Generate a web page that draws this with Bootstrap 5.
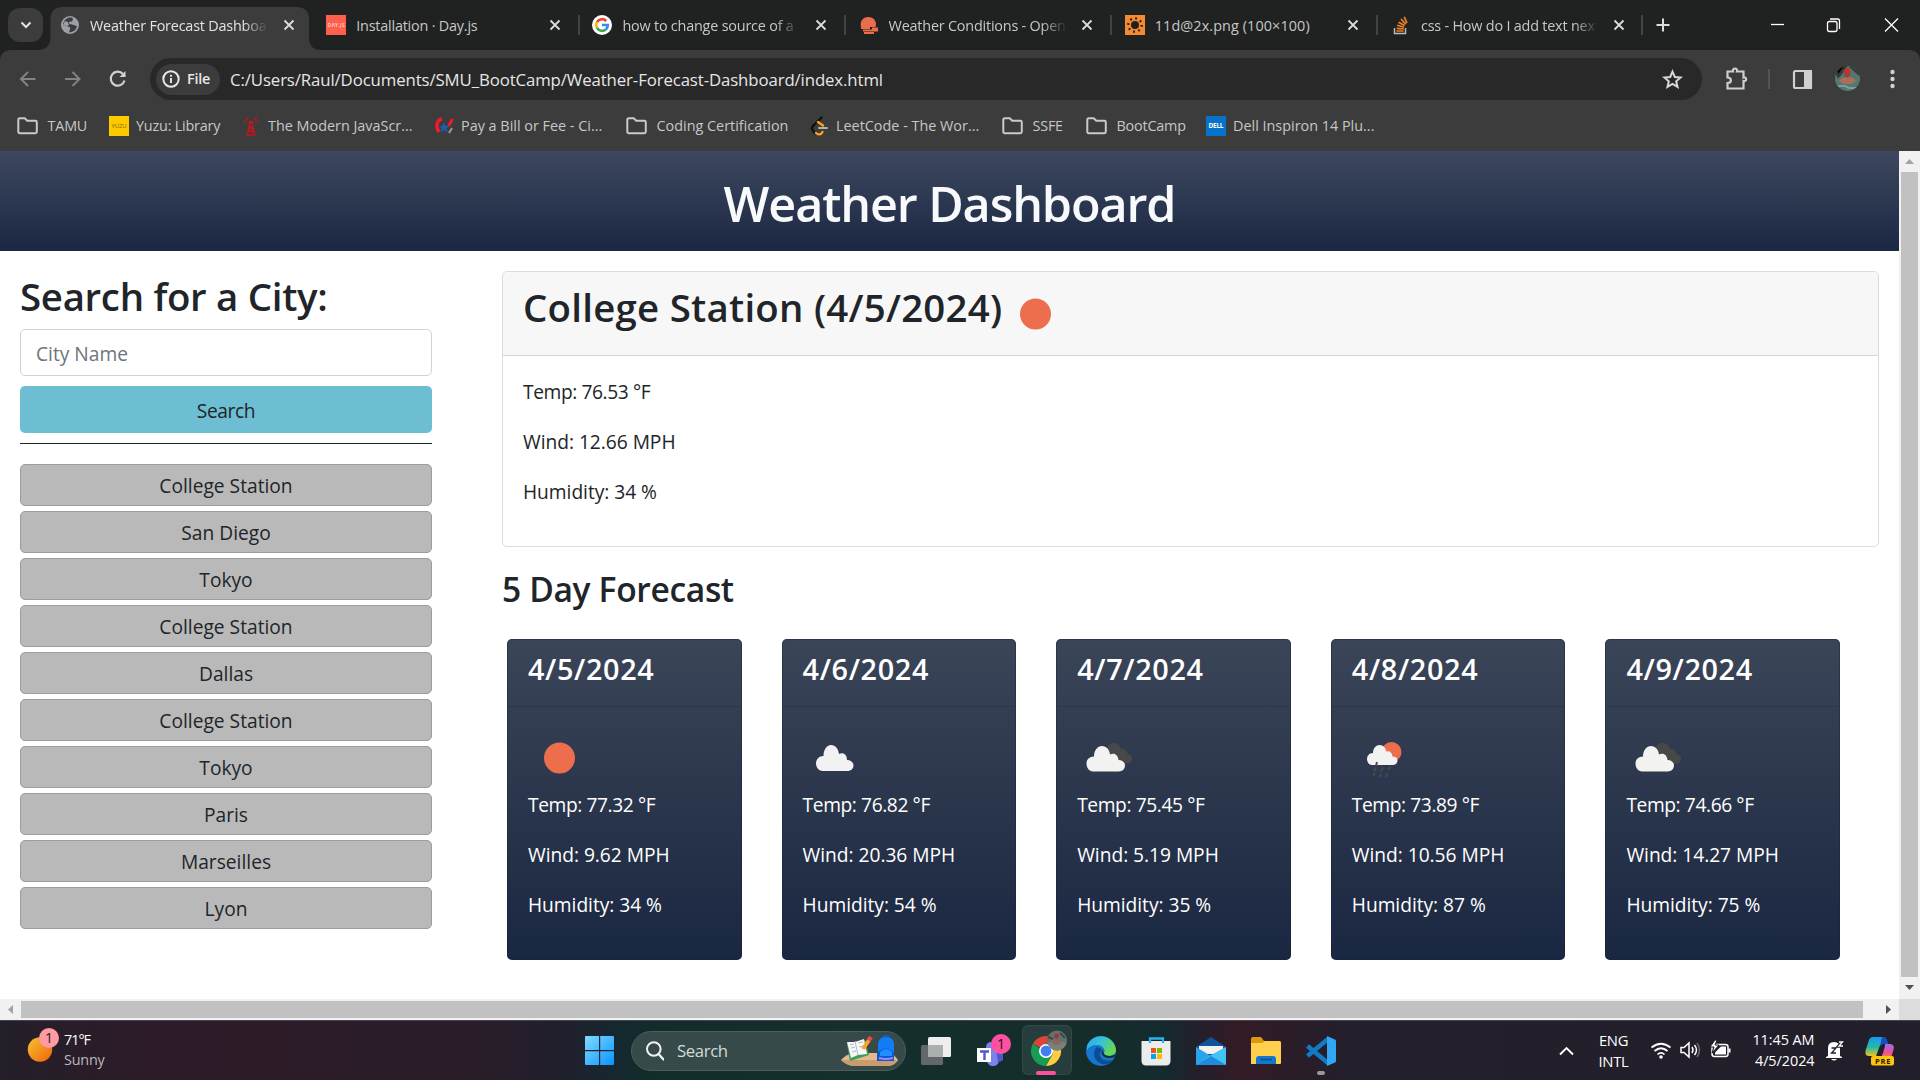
<!DOCTYPE html>
<html lang="en">
<head>
<meta charset="utf-8">
<meta name="viewport" content="width=device-width, initial-scale=1">
<title>Weather Forecast Dashboard</title>
<link href="https://cdn.jsdelivr.net/npm/bootstrap@5.3.0/dist/css/bootstrap.min.css" rel="stylesheet">
<style>
html,body{height:1080px;overflow:hidden}
body{font-family:"Open Sans","Noto Sans",sans-serif;font-size:19.2px;line-height:30px;letter-spacing:-.03px;color:#212529;background:#fff}
svg{display:block;flex:none}
/* browser chrome */
.browser-text{font-size:14.4px;line-height:20px;letter-spacing:-.2px;color:#c7c7c7;white-space:nowrap}
.tabstrip{height:50px;background:#202221;padding-left:8px}
.tab-search{width:35px;height:34px;border-radius:12px;background:#3c3c3c;margin-right:4.5px}
.tab{width:266.2px;height:50px;padding-left:12.5px;position:relative}
.tab-label{width:177px;margin:1px 15.5px 0 10px;overflow:hidden}
.tab-label.fade-out{-webkit-mask-image:linear-gradient(90deg,#000 153px,transparent 178px);mask-image:linear-gradient(90deg,#000 153px,transparent 178px)}
.tab.current{color:#e3e3e3}
.tab.current .tab-bg{position:absolute;left:-10px;top:7px;z-index:0}
.tab.current>:not(.tab-bg){z-index:1}
.tab.ruled::after{content:"";position:absolute;right:0;top:15px;width:2px;height:20px;background:#434343}
.toolbar-wrap{background:#202221}
.tool{height:50px;background:#3c3c3c;border-radius:10px 10px 0 0;padding-top:8px}
.omnibox{width:1552px;height:42px;border-radius:21px;background:#282828;padding-left:6px;padding-right:19px}
.chip{width:64px;height:31px;border-radius:16px;background:#3c3c3c;color:#e8e8e8;padding-left:6px;gap:7px}
.url{font-size:16.8px;letter-spacing:-.11px;color:#e6e6e6;margin:1px 0 0 10px;white-space:nowrap}
.bookmarks{height:51px;background:#3c3c3c;padding-left:17px}
.bookmarks>div{display:flex;align-items:center;width:193px;gap:7px}
.bookmarks>.folder{gap:9.5px}
.bookmarks>.trail{letter-spacing:0}
.bookmarks>:nth-child(1){width:92px}.bookmarks>:nth-child(2){width:132px}
.bookmarks>:nth-child(4){width:192px}.bookmarks>:nth-child(5){width:183px}
.bookmarks>:nth-child(7){width:84px}.bookmarks>:nth-child(8){width:120px}
/* page */
.viewport{height:869px}
.page{width:1899px;height:848px}
.hero{height:100px;background:linear-gradient(#3d475f,#1b2842);padding-top:22px}
.hero h1{font-size:48.5px;line-height:60px;font-weight:600;letter-spacing:-1.1px;color:#f8f9fa;margin:0}
.side{width:412px;padding-top:21px}
.side h2{font-size:38.4px;line-height:48px;font-weight:600;letter-spacing:-.3px;margin-bottom:9px}
.form-control{height:47px;font-size:19.2px;padding:2px 15px 0;border:1px solid #ced4da;border-radius:5px;letter-spacing:0}
.form-control::placeholder{color:#6c757d}
.search-btn{height:47px;border-radius:5px;background:#6dbdd3;color:#212529;font-size:19.2px;padding:3px 0 0;border:0;margin-top:10px;letter-spacing:-.4px}
.rule{height:1px;background:#222;margin:10px 0 20px}
.city{height:42px;margin-bottom:5px;border-radius:5px;background:#b9b9b9;border:1px solid #9c9c9c;color:#212529;font-size:19.2px;line-height:30px;padding:2px 0 0;letter-spacing:0}
.detail{width:1377px;padding-top:20px;margin-left:70px}
.now{height:276px;border:1px solid #dcdcdc;border-radius:5px}
.now .card-header{height:84px;padding:11px 20px 0;background:#f7f7f7;border-bottom:1px solid #d8d8d8}
.now h2{font-size:38.4px;line-height:48px;font-weight:600;letter-spacing:.25px;margin:0 2px 0 0}
.card-body{padding:21px 20px 0}
.card-body p{margin:0 0 20px;white-space:nowrap}
.card-body p:first-of-type{letter-spacing:-.4px}
.detail h3{font-size:33.6px;line-height:42px;font-weight:600;letter-spacing:-.35px;margin:21px 0 29px}
.forecast{gap:40px;padding-left:5px}
.day{width:234.6px;height:321px;border:0;border-radius:5px;background:linear-gradient(#3b4558,#1a2741);color:#fff;box-shadow:inset 0 0 0 1px rgba(25,35,60,.45)}
.day .card-header{height:68px;padding:12px 21px 0;background:none;border-bottom:1px solid #2c364b}
.day h4{font-size:28.8px;line-height:36px;font-weight:600;letter-spacing:.65px;margin:0}
.day .card-body{padding:20px 21px 0}
.day .card-body svg{margin-bottom:1px}
.vbar{width:21px;background:#f1f1f1}
.vbar .thumb{width:17px;height:805px;background:#c1c1c1}
.hbar{height:21px;background:#f1f1f1}
.hbar .thumb{width:1842px;height:17px;background:#c1c1c1}
.arrow{width:21px;height:21px}
/* taskbar */
.taskbar{height:60px;border-top:1px solid #47444f;background:linear-gradient(90deg,#241f2a 0,#2d1b29 8%,#2d1b28 14%,#281e2a 26%,#211f2c 29%,#182630 31.5%,#112c2b 33.5%,#142f2c 44%,#142d2b 58%,#132b2e 60.5%,#241f2b 62.5%,#341b26 64.5%,#2b1d28 67%,#231f2b 70%,#221f2a 100%);color:#fff}
.taskbar .small-text{font-size:14.4px;line-height:20.5px;letter-spacing:-.2px}
.w-widget{width:565px;padding-left:27px;gap:8px}
.w-widget .small-text div:first-child{letter-spacing:-1px}
.winsearch{width:275px;height:40px;border-radius:20px;background:#364a4a;border:1px solid #4c5d5c;margin-left:17px;padding:0 6px 0 14px}
.winsearch span{font-size:16.8px;letter-spacing:-.4px;color:#d5dada;margin-left:13px}
.apps{margin-left:2.5px}
.apps>div{width:55px;height:59px;display:flex;align-items:center;justify-content:center;position:relative}
.apps .open::before{content:"";position:absolute;inset:4px 2px 5px 3px;border-radius:6px;background:rgba(255,255,255,.08);border:1px solid rgba(255,255,255,.06)}
.apps svg{position:relative;overflow:visible}
.run-mark{position:absolute;bottom:5px;left:17px;width:20px;height:4px;border-radius:2px;background:#ff4fa0}
.run-mark.idle{left:23px;width:8px;background:#999}
.tray{margin-left:auto;padding-right:25px}
</style>
</head>
<body class="d-flex flex-column">
<svg width="0" height="0" class="position-absolute">
  <defs>
    <symbol id="x" viewBox="0 0 12 12"><path d="M1.500 1.500l9 9M10.500 1.500l-9 9" stroke="#dcdcdc" stroke-width="1.800" fill="none"/></symbol>
    <symbol id="folder" viewBox="0 0 21 18"><path d="M1.300 2.700c0-.8.5-1.400 1.300-1.400h5.200l2.400 2.500h8.200c.8 0 1.400.6 1.400 1.400v9.600c0 .8-.6 1.400-1.400 1.400H2.700c-.8 0-1.400-.6-1.400-1.400z" fill="none" stroke="#c9c9c9" stroke-width="2"/></symbol>
    <symbol id="sun" viewBox="0 0 62 62"><circle cx="31.500" cy="31" r="15.500" fill="#ec6e4c"/></symbol>
    <symbol id="cloud" viewBox="0 0 62 62"><path d="M20 44c-4 0-7-3.500-7-7.500s3-7.500 7.500-7.500c0-6 3-11 7.500-11s7.500 4 8 9c4-2 8 0 8 6 4 0 6.500 2.500 6.500 5.500s-2.500 5.500-6 5.500z" fill="#f2f2f2"/></symbol>
    <symbol id="clouds" viewBox="0 0 62 62"><path d="M29 25c0-6 4-9 7.500-9 4 0 7 3 7.500 6 4-1 6.500 2 6.500 5 3 0 4.500 3 4.500 4.500 0 3-2 5-5 5H35z" fill="#484848"/><path d="M16 44.500c-4 0-6.500-4-6.500-8s3-7 7.500-7c0-6 3.500-10.500 8-10.500s7.500 4 8 8.500c5-2 8 1 8.500 5.500 4 0 6.500 2.500 6.500 5.500s-2.500 6-6.500 6z" fill="#f2f2f0"/></symbol>
    <symbol id="rain" viewBox="0 0 62 62"><circle cx="39.500" cy="25" r="10" fill="#ec6e4c"/><path d="M20 38c-3 0-5-3-5-6s2-6 6-6c0-4 2.500-8 6.500-8s6.500 3 6.500 6.500c4-1 6 1 6.500 5 3 0 5 1.500 5 4s-2 4.500-5 4.500z" fill="#f2f2f2"/><path d="M25 35l-1 4M24 40.500l-2 4M31 40.500l-2 4M38 40l-1.500 3M22.500 46l-1 3M29 47l-1 3M35 46l-1 4" stroke="#4a4a4c" stroke-width="2"/></symbol>
  </defs>
</svg>

<!-- tab strip -->
<div class="tabstrip browser-text d-flex align-items-center">
  <div class="tab-search d-flex align-items-center justify-content-center"><svg width="12" height="8" viewBox="0 0 12 8"><path d="M1.500 1.500L6 6l4.500-4.500" fill="none" stroke="#e3e3e3" stroke-width="2"/></svg></div>
  <div class="tab current d-flex align-items-center">
    <svg class="tab-bg" width="282" height="43" viewBox="0 0 282 43"><path d="M0 43c8 0 12.500-5 12.500-12V12c0-8 5-12 12-12h234c8 0 12.500 4 12.500 12v19c0 7 4 12 11 12z" fill="#3c3c3c"/></svg>
    <svg class="position-relative" width="20" height="20" viewBox="0 0 20 20"><circle cx="10" cy="10" r="9" fill="#9aa0a6"/><path d="M9 2.600C5 4 3 7 3 10l5 1.500c1.500 0 2.500 1 2 2.500l-1 3.200c4 .2 7-2 8-6l-4-1.500-3-.7c-1.500-.5-1-2 0-2.500h2l1-2.500c.2-1-2-1.700-4-1.400z" fill="#3c3c3c"/><path d="M5 6l3 1 1 3-2 1-4-1z" fill="#9aa0a6"/></svg>
    <div class="tab-label fade-out position-relative">Weather Forecast Dashboa</div><svg class="position-relative" width="12" height="12"><use href="#x"/></svg>
  </div>
  <div class="tab ruled d-flex align-items-center">
    <svg width="20" height="20" viewBox="0 0 20 20"><rect width="20" height="20" fill="#ff5f4c"/><text x="1.500" y="12" font-size="5" font-weight="700" fill="#ffc9bf" textLength="17">DAY.JS</text></svg>
    <div class="tab-label">Installation · Day.js</div><svg width="12" height="12"><use href="#x"/></svg>
  </div>
  <div class="tab ruled d-flex align-items-center">
    <svg width="20" height="20" viewBox="0 0 20 20"><circle cx="10" cy="10" r="10" fill="#fff"/><g fill="none" stroke-width="2.700"><path d="M5 7.100A5.800 5.800 0 0 1 14.200 6" stroke="#ea4335"/><path d="M5 12.900a5.800 5.800 0 0 1 0-5.800" stroke="#fbbc05"/><path d="M13.800 14.400A5.800 5.800 0 0 1 5 12.900" stroke="#34a853"/><path d="M10 10h5.800c0 1.900-.8 3.400-2 4.400" stroke="#4285f4"/></g></svg>
    <div class="tab-label fade-out">how to change source of a</div><svg width="12" height="12"><use href="#x"/></svg>
  </div>
  <div class="tab ruled d-flex align-items-center">
    <svg width="20" height="20" viewBox="0 0 20 20"><path d="M2 12C.5 5 5 2 9.500 2S18.500 6 16.500 12z" fill="#eb6e4b"/><path d="M2 13h9M13 13.500h6M4 15.500h15M5 18h10" stroke="#eb6e4b" stroke-width="1.800"/></svg>
    <div class="tab-label fade-out">Weather Conditions - Open</div><svg width="12" height="12"><use href="#x"/></svg>
  </div>
  <div class="tab ruled d-flex align-items-center">
    <svg width="20" height="20" viewBox="0 0 20 20"><rect width="20" height="20" fill="#f58a33"/><circle cx="10" cy="10" r="4" fill="#202020"/><circle cx="10" cy="10" r="6.700" fill="none" stroke="#202020" stroke-width="2.300" stroke-dasharray="1.800 3.460"/></svg>
    <div class="tab-label" style="letter-spacing:.1px">11d@2x.png (100×100)</div><svg width="12" height="12"><use href="#x"/></svg>
  </div>
  <div class="tab ruled d-flex align-items-center" style="width:265px">
    <svg width="20" height="20" viewBox="0 0 20 20"><path d="M3.500 13v5.500h11V13" fill="none" stroke="#bcbbbb" stroke-width="1.500"/><path d="M5.500 16h7M5.700 13.300l7 .7M6.200 10.300l6.800 2M7.500 7.200l6.200 3.400M10 4l4.800 5.200M13.200 1.800L16 8" stroke="#f48024" stroke-width="1.700"/></svg>
    <div class="tab-label fade-out">css - How do I add text nex</div><svg width="12" height="12"><use href="#x"/></svg>
  </div>
  <svg width="14" height="14" viewBox="0 0 14 14" style="margin-left:13px"><path d="M7 .5v13M.5 7h13" stroke="#dcdcdc" stroke-width="2"/></svg>
  <svg class="ms-auto" style="margin-right:21px" width="128" height="16" viewBox="0 0 128 16"><g fill="none" stroke="#fff" stroke-width="1.300"><path d="M0 7.500h13"/><rect x="56.500" y="4.500" width="9.500" height="10" rx="2"/><path d="M59 2h7.500a2 2 0 0 1 2 2V12"/><path d="M114 1.500l13 13M127 1.500l-13 13"/></g></svg>
</div>

<!-- toolbar -->
<div class="toolbar-wrap">
<div class="tool browser-text d-flex align-items-center">
  <svg width="150" height="42" viewBox="0 0 150 42" fill="none" stroke-width="2"><path d="M35.500 21h-14M28 14l-7 7 7 7" stroke="#828282"/><path d="M65 21h14M72.500 14l7 7-7 7" stroke="#828282"/><path d="M124.500 22.500a7 7 0 1 1-1.500-6.500l2 2" stroke="#d0d0d0" stroke-width="2.200"/><path d="M125.500 13v6h-6z" fill="#d0d0d0"/></svg>
  <div class="omnibox d-flex align-items-center">
    <div class="chip d-flex align-items-center"><svg width="18" height="18" viewBox="0 0 18 18"><circle cx="9" cy="9" r="7.700" fill="none" stroke="#e8e8e8" stroke-width="2"/><path d="M9 8v5M9 4.800v2" stroke="#e8e8e8" stroke-width="1.900"/></svg><span class="fw-semibold">File</span></div>
    <div class="url">C:/Users/Raul/Documents/SMU_BootCamp/Weather-Forecast-Dashboard/index.html</div>
    <svg class="ms-auto" width="21" height="21" viewBox="0 0 20 20"><path d="M10 2.500l2.200 5.100 5.500.5-4.200 3.600 1.300 5.400L10 14.200l-4.800 2.900 1.300-5.400-4.200-3.600 5.500-.5z" fill="none" stroke="#d8d8d8" stroke-width="1.900"/></svg>
  </div>
  <svg width="218" height="42" viewBox="0 0 218 42"><path d="M25.500 13.500h5.500c-1-4 5-4 4 0h6.500v6c3.500-1 3.500 4.500 0 3.500v7.500h-16v-5.500c4.500 0 4.500-5.500 0-5.500z" fill="none" stroke="#cfcfcf" stroke-width="2.200"/><path d="M67 11v20" stroke="#5d5d5d" stroke-width="1.500"/><rect x="92" y="13" width="17" height="17" rx="1.500" fill="none" stroke="#cfcfcf" stroke-width="2.200"/><path d="M102 12h8v19h-8z" fill="#cfcfcf"/><clipPath id="av"><circle cx="145.500" cy="20.500" r="12.500"/></clipPath><g clip-path="url(#av)"><path d="M132 7h28v16h-28z" fill="#5c736d"/><path d="M132 8h12l-8 10zM148 8l10 9M136 19l5-6" stroke="#2f3d37" stroke-width="2.500"/><path d="M132 21l28-1v14h-28z" fill="#527a72"/><path d="M137 23c4-5 13-6 17 0l-5 3h-8z" fill="#a8705a"/><path d="M136 28h7l4 2h9" stroke="#7d9c96" stroke-width="2"/><circle cx="145" cy="16.500" r="3" fill="#8d4638"/><path d="M141.500 14c1-6 7-5 7 1z" fill="#d3282d"/></g><g fill="#d0d0d0"><circle cx="190.500" cy="14" r="2.200"/><circle cx="190.500" cy="21" r="2.200"/><circle cx="190.500" cy="28" r="2.200"/></g></svg>
</div>
</div>

<!-- bookmarks -->
<div class="bookmarks browser-text d-flex align-items-center">
  <div class="folder"><svg width="21" height="18"><use href="#folder"/></svg>TAMU</div>
  <div><svg width="20" height="20" viewBox="0 0 20 20"><rect width="20" height="20" fill="#fdca00"/><text x="2.500" y="12" font-size="6" fill="#7b6510" textLength="15">YUZU</text></svg>Yuzu: Library</div>
  <div class="trail"><svg width="20" height="20" viewBox="0 0 20 20" fill="none" stroke="#c5151d"><path d="M9 7L6 19M11 7l3 12M8 10l4.500 3.500-6 3.500M12 10l-4.500 3.500 6 3.500" stroke-width="1.200"/><path d="M5.500 19h9" stroke-width="1.500"/><path d="M8.300 5.500h3.400v2.500H8.300z" fill="#c5151d"/><path d="M7 4L4 1M6 6L2 5M13 4l3-3M14 6l4-1" stroke-width="1.100"/></svg>The Modern JavaScr...</div>
  <div class="trail"><svg width="20" height="20" viewBox="0 0 20 20"><path d="M8 3C3 4 1 10 5 16" fill="none" stroke="#ed1c29" stroke-width="3.500"/><path d="M10 6l1.500 4H15l-2.500 2.500 1 4L10 14l-3.500 2.500 1-4L5 10h3.500z" fill="#1c5db0"/><path d="M18.500 3l-4 7" stroke="#ed1c29" stroke-width="3"/><path d="M18 12l-3 5" stroke="#999" stroke-width="2"/></svg>Pay a Bill or Fee - Ci...</div>
  <div class="folder"><svg width="21" height="18"><use href="#folder"/></svg><span style="letter-spacing:0">Coding Certification</span></div>
  <div class="trail"><svg width="20" height="20" viewBox="0 0 20 20" fill="none" stroke-width="2.400" stroke-linecap="round"><path d="M12.500 1.500L4 10" stroke="#111"/><path d="M4 10c-2 2-1 4 1 6l1.500 1.500" stroke="#111"/><path d="M9 6l5 3.500M7 17c2 2 5 2 6.500-1" stroke="#ffa116"/><path d="M10 12h8" stroke="#b3b3b3" stroke-width="2"/></svg>LeetCode - The Wor...</div>
  <div class="folder"><svg width="21" height="18"><use href="#folder"/></svg>SSFE</div>
  <div class="folder"><svg width="21" height="18"><use href="#folder"/></svg>BootCamp</div>
  <div class="trail"><svg width="20" height="20" viewBox="0 0 20 20"><rect width="20" height="20" fill="#0672cb"/><text x="2.500" y="12.300" font-size="6.500" font-weight="700" fill="#fff" textLength="15">DELL</text></svg>Dell Inspiron 14 Plu...</div>
</div>

<!-- page viewport with scrollbars -->
<div class="viewport">
  <div class="d-flex">
    <main class="page">
      <header class="hero text-center"><h1>Weather Dashboard</h1></header>
      <div class="d-flex" style="margin-left:20px">
        <aside class="side">
          <h2>Search for a City:</h2>
          <input class="form-control" type="text" placeholder="City Name">
          <button class="btn search-btn w-100 d-block">Search</button>
          <div class="rule"></div>
          <button class="btn city w-100 d-block">College Station</button>
          <button class="btn city w-100 d-block">San Diego</button>
          <button class="btn city w-100 d-block">Tokyo</button>
          <button class="btn city w-100 d-block">College Station</button>
          <button class="btn city w-100 d-block">Dallas</button>
          <button class="btn city w-100 d-block">College Station</button>
          <button class="btn city w-100 d-block">Tokyo</button>
          <button class="btn city w-100 d-block">Paris</button>
          <button class="btn city w-100 d-block">Marseilles</button>
          <button class="btn city w-100 d-block">Lyon</button>
        </aside>
        <section class="detail">
          <div class="card now">
            <div class="card-header d-flex"><h2>College Station (4/5/2024)</h2><svg width="62" height="62"><use href="#sun"/></svg></div>
            <div class="card-body"><p>Temp: 76.53 °F</p><p>Wind: 12.66 MPH</p><p>Humidity: 34 %</p></div>
          </div>
          <h3>5 Day Forecast</h3>
          <div class="forecast d-flex">
            <div class="card day"><div class="card-header"><h4>4/5/2024</h4></div><div class="card-body"><svg width="62" height="62"><use href="#sun"/></svg><p>Temp: 77.32 °F</p><p>Wind: 9.62 MPH</p><p>Humidity: 34 %</p></div></div>
            <div class="card day"><div class="card-header"><h4>4/6/2024</h4></div><div class="card-body"><svg width="62" height="62"><use href="#cloud"/></svg><p>Temp: 76.82 °F</p><p>Wind: 20.36 MPH</p><p>Humidity: 54 %</p></div></div>
            <div class="card day"><div class="card-header"><h4>4/7/2024</h4></div><div class="card-body"><svg width="62" height="62"><use href="#clouds"/></svg><p>Temp: 75.45 °F</p><p>Wind: 5.19 MPH</p><p>Humidity: 35 %</p></div></div>
            <div class="card day"><div class="card-header"><h4>4/8/2024</h4></div><div class="card-body"><svg width="62" height="62"><use href="#rain"/></svg><p>Temp: 73.89 °F</p><p>Wind: 10.56 MPH</p><p>Humidity: 87 %</p></div></div>
            <div class="card day"><div class="card-header"><h4>4/9/2024</h4></div><div class="card-body"><svg width="62" height="62"><use href="#clouds"/></svg><p>Temp: 74.66 °F</p><p>Wind: 14.27 MPH</p><p>Humidity: 75 %</p></div></div>
          </div>
        </section>
      </div>
    </main>
    <div class="vbar d-flex flex-column align-items-center">
      <svg class="arrow" viewBox="0 0 21 21"><path d="M6 13h9l-4.500-5z" fill="#a3a3a3"/></svg>
      <div class="thumb"></div>
      <svg class="arrow mt-auto" viewBox="0 0 21 21"><path d="M6 7h9l-4.500 5z" fill="#505050"/></svg>
    </div>
  </div>
  <div class="hbar d-flex align-items-center">
    <svg class="arrow" viewBox="0 0 21 21"><path d="M13 6v9l-5-4.500z" fill="#a3a3a3"/></svg>
    <div class="thumb"></div>
    <svg style="margin-left:15px" class="arrow" viewBox="0 0 21 21"><path d="M8 6v9l5-4.500z" fill="#505050"/></svg>
    <div class="ms-auto h-100" style="width:21px;background:#dcdcdc"></div>
  </div>
</div>

<!-- taskbar -->
<div class="taskbar d-flex align-items-center">
  <div class="w-widget d-flex align-items-center">
    <svg width="32" height="40" viewBox="0 0 32 40" style="overflow:visible"><defs><linearGradient id="sg" x1="0" y1="0" x2="1" y2="1"><stop offset="0" stop-color="#f7c331"/><stop offset="1" stop-color="#f0620c"/></linearGradient></defs><circle cx="13" cy="18.500" r="12.200" fill="url(#sg)"/><circle cx="22" cy="7" r="10" fill="#ff99a4"/><text x="22" y="12" font-size="14" text-anchor="middle" fill="#1c1c1c">1</text></svg>
    <div class="small-text" style="margin:-1px 0 0 -3px"><div>71°F</div><div style="color:#bdb8bd">Sunny</div></div>
  </div>
  <svg width="49" height="30" viewBox="-20 0 49 30"><defs><linearGradient id="wg" x1="0" y1="0" x2="1" y2="1"><stop offset="0" stop-color="#7fdcff"/><stop offset="1" stop-color="#0a93ff"/></linearGradient></defs><path d="M0 1q0-1 1-1h13v14H0zM15.200 0H28q1 0 1 1v13H15.200zM0 15.200h14V29H1q-1 0-1-1zM15.200 15.200H29V28q0 1-1 1H15.200z" fill="url(#wg)"/></svg>
  <div class="winsearch d-flex align-items-center">
    <svg width="18" height="20" viewBox="0 0 18 20" fill="none" stroke="#f0f2f2" stroke-width="2"><circle cx="7.800" cy="8" r="6.800"/><path d="M12.500 13l5 5.500" stroke-linecap="round" stroke-width="2.300"/></svg>
    <span>Search</span>
    <svg class="ms-auto" width="58" height="34" viewBox="0 0 58 34"><path d="M0 26q5-6 14-7h30q10 1 13 7-3 5-9 6H12Q5 31 0 26z" fill="#e3b88d"/><path d="M0 26h57q-3 5-9 6H12Q5 31 0 26z" fill="#c99c6e"/><path d="M6 10l3 17 19-6-4-15z" fill="#3f9e57"/><path d="M6 8l4 16 7-3 9-1-3-15-9 3z" fill="#f6f7fa"/><path d="M14 7l3 14M9 11l4-1M10 14l4-1M11 18l4-1M17 9l5-1M18 13l5-1" stroke="#b5b9c7"/><path d="M22 15l6-9" stroke="#f9a52a" stroke-width="4"/><path d="M27.500 6.500L30 3" stroke="#f2473e" stroke-width="4.500"/><path d="M41 4q4-5 8 0" fill="none" stroke="#1260b5" stroke-width="2"/><path d="M37 11q0-8 8-8t8 8v15H37z" fill="#117cf3"/><path d="M36 19q9-9 17 0v8H36z" fill="#0759cf"/><path d="M39 18q6-6 12 0v4H39z" fill="#218dff"/><path d="M38 24q7 2 14 0" stroke="#a784ff" stroke-width="2" fill="none"/></svg>
  </div>
  <div class="apps d-flex">
    <div><svg width="30" height="28" viewBox="0 0 30 28"><rect x="0" y="8" width="22" height="20" rx="1.500" fill="#636769"/><rect x="7" y="0" width="23" height="20" rx="1.500" fill="#eee"/><path d="M7 8h15v12H7z" fill="#aaafb0"/></svg></div>
    <div><svg width="28" height="32" viewBox="0 0 28 32"><circle cx="14" cy="12" r="5" fill="#7b83eb"/><path d="M10 12h12v13c0 4-3 6-6 6s-6-2-6-6z" fill="#7b83eb"/><path d="M19 15h7v10q-2 2-5 2z" fill="#5059c9"/><rect y="13" width="14" height="14" fill="#fff"/><path d="M3 16.500h9M7.500 16v9" stroke="#5059c9" stroke-width="2.400"/><circle cx="24" cy="9" r="10" fill="#ff4fa0"/><text x="24" y="14" font-size="14" text-anchor="middle" fill="#26101b">1</text></svg></div>
    <div class="open"><svg width="30" height="30" viewBox="0 0 30 30"><path d="M15 15L2 7.500A15 15 0 0 1 28 7.500H15z" fill="#db4437"/><path d="M2 7.500A15 15 0 0 0 15 30l6-11-6-2z" fill="#179c52"/><path d="M28 7.500A15 15 0 0 1 15 30l6.500-11.500L21 8z" fill="#ffcd40"/><circle cx="15" cy="15" r="7" fill="#fff"/><circle cx="15" cy="15" r="5.400" fill="#3f7ff0"/><clipPath id="pc"><circle cx="26" cy="4.500" r="10"/></clipPath><g clip-path="url(#pc)"><path d="M16-6h20v21H16z" fill="#64716d"/><path d="M16 7q9-4 20 0v8H16z" fill="#77827e"/><path d="M20 6q5-4 11 0l-3 3h-5z" fill="#8d675a"/><circle cx="25.500" cy="0" r="2.300" fill="#b8292c"/><path d="M17 1l5 2M29-3l5 5" stroke="#3b4945" stroke-width="2"/></g></svg><i class="run-mark"></i></div>
    <div><svg width="30" height="30" viewBox="0 0 30 30"><defs><linearGradient id="eg" x1="0" y1="0" x2="1" y2=".5"><stop offset="0" stop-color="#28a8e8"/><stop offset=".5" stop-color="#35c3d8"/><stop offset="1" stop-color="#6ad84c"/></linearGradient></defs><circle cx="15" cy="15" r="15" fill="#1576cf"/><path d="M1 10A15 15 0 0 1 30 14c0 4-4 6-8 6-3 0-5-1-4-3 2-3-1-8-7-8-5 0-8 2-10 5z" fill="url(#eg)"/><path d="M11 11c-4 3-4 10 0 14 4 4 11 5 16-1-3 1-13 2-13-6 0-2 1-4 2-5z" fill="#0b4c93"/><path d="M16.500 14c-2 2-1 8 7 8 3 0 4-1 5-1l1-3c-2 2-8 3-11.500 0z" fill="#132d31"/></svg></div>
    <div><svg width="30" height="30" viewBox="0 0 30 30"><path d="M9 7V2.500h13V7" fill="none" stroke="#26b4ee" stroke-width="2.300"/><path d="M.5 5h29v20c0 3-2 4.500-4.500 4.500H5C2.500 29.500.5 28 .5 25z" fill="#ececec"/><path d="M9 5v2M22 5v2" stroke="#26b4ee" stroke-width="2.300"/><path d="M10 12h5v5h-5z" fill="#f25022"/><path d="M16 12h5v5h-5z" fill="#7fba00"/><path d="M10 18h5v5h-5z" fill="#00a4ef"/><path d="M16 18h5v5h-5z" fill="#ffb900"/></svg></div>
    <div><svg width="30" height="28" viewBox="0 0 30 28"><path d="M0 10L15 0l15 10-15 9z" fill="#0f539c"/><path d="M3 9h24v8H3z" fill="#f1f1f1"/><path d="M0 10l15 9L30 10v18H0z" fill="#2aa3ec"/><path d="M0 28l15-10L30 10v18z" fill="#42c3f5"/><path d="M0 28l15-9 15 9z" fill="#208ae0"/></svg></div>
    <div><svg width="30" height="27" viewBox="0 0 30 27"><path d="M0 2q0-2 2-2h8l3 4h15q2 0 2 2v8H0z" fill="#dc9a0b"/><path d="M0 6h11l3-2h14q2 0 2 2v20q0 1-1 1H0z" fill="#ffd04d"/><path d="M5 27v-5q0-3 3-3h14q3 0 3 3v5z" fill="#1277cd"/><path d="M9 22.500h12" stroke="#0b4f91" stroke-width="1.500"/></svg></div>
    <div><svg width="30" height="30" viewBox="0 0 30 30"><path d="M1.500 10L22 27M1.500 20L22 3" stroke="#1279c4" stroke-width="4.500"/><path d="M21 0l8 3.500q1 .5 1 1.500v20q0 1-1 1.500L21 30z" fill="#2fa7f4"/></svg><i class="run-mark idle"></i></div>
  </div>
  <div class="tray d-flex align-items-center">
    <svg width="15" height="10" viewBox="0 0 15 10"><path d="M1 8.500l6.500-6.500L14 8.500" fill="none" stroke="#fff" stroke-width="1.900"/></svg>
    <div class="small-text text-center" style="width:34px;margin-left:23px;letter-spacing:-.3px;font-size:14.8px">ENG<br>INTL</div>
    <svg width="84" height="24" viewBox="0 0 84 24" style="margin:-2px 0 0 18px" fill="none" stroke="#fff"><g stroke-width="1.700"><path d="M2.500 9.500q9.500-7.500 19 0"/><path d="M5.500 13q6.500-5.500 13 0"/><path d="M8.500 16.500q3.500-3.500 7 0"/></g><circle cx="12" cy="19" r="1.800" fill="#fff" stroke="none"/><path d="M32 9.500h3l5-4.500v14l-5-4.500h-3z" stroke-width="1.500"/><path d="M43 9q2 3 0 6M45.500 7q4 5 0 10" stroke-width="1.500"/><path d="M48 5q5 7 0 14" stroke="#6a6871" stroke-width="1.500"/><rect x="63" y="6.500" width="16" height="12" rx="2.500" stroke-width="1.500"/><path d="M66 16.500v-2l6-6h5v8z" fill="#fff" stroke="none"/><path d="M80.500 10.500v4" stroke-width="2"/><path d="M66 2l-5 7h4l-2 6 7-8h-4l2-5z" fill="#fff" stroke="#221f2a" stroke-width="1"/></svg>
    <div class="small-text text-end" style="width:82px;letter-spacing:-.05px">11:45 AM<br>4/5/2024</div>
    <svg width="18" height="20" viewBox="0 0 18 20" style="margin-left:11px;overflow:visible"><path d="M2 15V7q0-6 6-6t6 6v8l2 1v1H0v-1z" fill="#fff"/><path d="M5 18h6q-3 3-6 0z" fill="#fff"/><path d="M5.500 7h4.500l-4.500 5H10" stroke="#221f2a" stroke-width="1.300" fill="none"/><path d="M13 1h3.500l-3.500 4h4" stroke="#221f2a" stroke-width="3.500" fill="none"/><path d="M13 1h3.500l-3.500 4h4" stroke="#fff" stroke-width="1.300" fill="none"/></svg>
    <svg width="30" height="30" viewBox="0 0 30 30" style="margin-left:21.500px"><defs><linearGradient id="c1" x1="0" y1="0" x2="0" y2="1"><stop offset="0" stop-color="#1699f5"/><stop offset=".55" stop-color="#29b9a3"/><stop offset="1" stop-color="#f0c61d"/></linearGradient><linearGradient id="c2" x1="0" y1="0" x2="0" y2="1"><stop offset="0" stop-color="#a16bf2"/><stop offset=".6" stop-color="#f0508e"/><stop offset="1" stop-color="#f9943d"/></linearGradient></defs><path d="M8 1h10q3 0 4 4l1 3h-5q-3 0-4 4l-3 8H4q-5 0-3-7l3-9q1-3 4-3z" fill="url(#c1)"/><path d="M17 1h1q3 0 4 4l1 3h-5q-2 0-3 2z" fill="#174ec5"/><path d="M20 8h5q5 0 3.500 6l-3 9H12l3-1q2-1 3-5l2-7z" fill="url(#c2)"/><rect x="6" y="20" width="23" height="9.500" rx="2" fill="#fcc60a"/><text x="10" y="27.600" font-size="7.500" font-weight="700" fill="#221a00" textLength="15.500">PRE</text></svg>
  </div>
</div>
<script src="https://cdn.jsdelivr.net/npm/bootstrap@5.3.0/dist/js/bootstrap.bundle.min.js"></script>
</body>
</html>
